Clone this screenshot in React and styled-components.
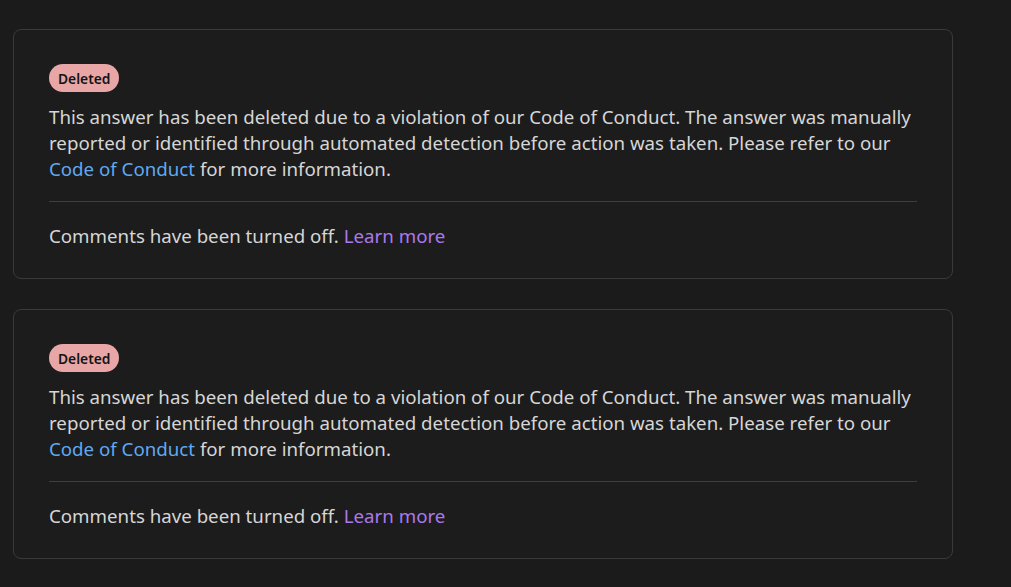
import React from 'react';
import styled, { createGlobalStyle } from 'styled-components';

const GlobalStyle = createGlobalStyle`
  body {
    margin: 0;
    background: #1b1b1b;
    font-family: "Noto Sans", "Open Sans", sans-serif;
  }
`;

const Page = styled.div`
  width: 1011px;
  min-height: 587px;
  padding: 29px 0 0 13px;
  box-sizing: border-box;
  display: flex;
  flex-direction: column;
  gap: 30px;
`;

const Card = styled.div`
  width: 940px;
  box-sizing: border-box;
  border: 1px solid #3a3a3a;
  border-radius: 8px;
  background: #1c1c1c;
  padding: 34px 35px 29px 35px;
`;

const Badge = styled.span`
  display: inline-flex;
  align-items: center;
  height: 28px;
  padding: 0 9px;
  border-radius: 14px;
  background: #e8a6a6;
  color: #141414;
  font-size: 13.8px;
  font-weight: 600;
`;

const Body = styled.p`
  margin: 12px 0 0;
  color: #d6d6d6;
  font-size: 18.7px;
  line-height: 26px;
  white-space: nowrap;
`;

const Link = styled.a`
  color: ${p => p.$tone === 'purple' ? '#ac78ec' : '#5fa9f2'};
  text-decoration: none;
`;

const Divider = styled.hr`
  border: none;
  border-top: 1px solid #3d3d3d;
  margin: 19px 0 21px;
`;

const Footer = styled.div`
  color: #d6d6d6;
  font-size: 18.7px;
  line-height: 26px;
`;

const DeletedAnswer = () => (
  <Card>
    <Badge>Deleted</Badge>
    <Body>
      This answer has been deleted due to a violation of our Code of Conduct. The answer was manually
      <br />
      reported or identified through automated detection before action was taken. Please refer to our
      <br />
      <Link href="#">Code of Conduct</Link> for more information.
    </Body>
    <Divider />
    <Footer>
      Comments have been turned off. <Link href="#" $tone="purple">Learn more</Link>
    </Footer>
  </Card>
);

export default function App() {
  return (
    <>
      <GlobalStyle />
      <Page>
        <DeletedAnswer />
        <DeletedAnswer />
      </Page>
    </>
  );
}
